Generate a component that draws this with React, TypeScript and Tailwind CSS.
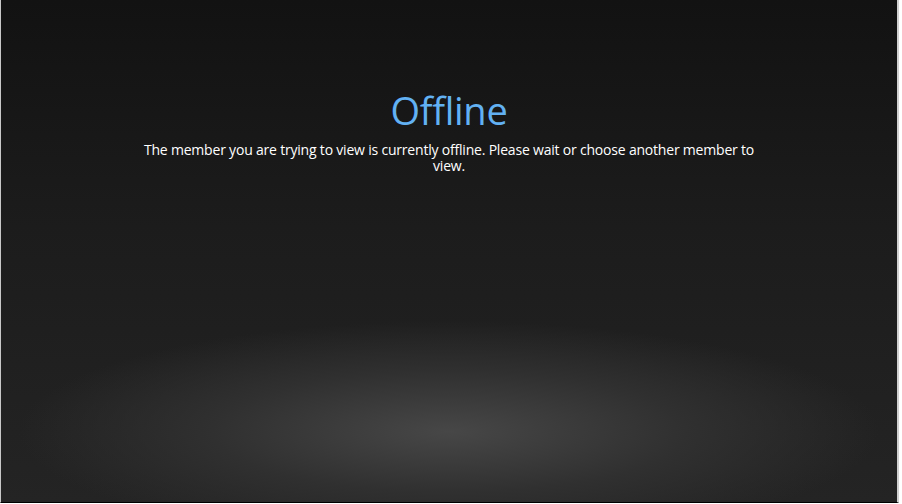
export default function App() {
  return (
    <div className="w-[902px] h-[504px] bg-white flex">
      <div className="w-[899px] h-[503px] border-l border-l-[#c8c8c8] border-r-2 border-r-[#d0d0d0] border-b border-b-black bg-[radial-gradient(ellipse_48%_22%_at_50%_86%,#474747_0%,#303030_55%,rgba(32,32,32,0)_100%),linear-gradient(to_bottom,#121212_0%,#1c1c1c_45%,#242424_100%)] font-['Open_Sans',sans-serif]">
        <div className="flex flex-col items-center pt-[87px]">
          <h1 className="text-[38px] leading-[46px] text-[#62b1f3] tracking-[-0.3px]">Offline</h1>
          <p className="mt-[9px] w-[628px] text-center text-[14px] leading-[16px] text-white tracking-[-0.2px]">
            The member you are trying to view is currently offline. Please wait or choose another member to view.
          </p>
        </div>
      </div>
    </div>
  );
}
